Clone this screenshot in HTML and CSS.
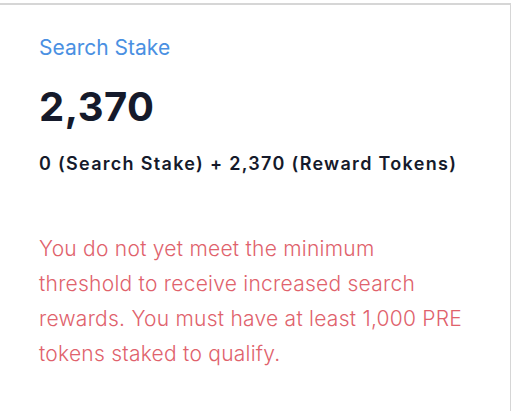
FILE: index.html
```html
<!DOCTYPE html>
<html lang="en">
<head>
    <meta charset="UTF-8">
    <title>Search Stake</title>
    <link rel="stylesheet" href="styles.css">
</head>
<body>
    <div class="card">
        <h2 class="card-title">Search Stake</h2>
        <div class="stake-total">2,370</div>
        <div class="stake-breakdown">0 (Search Stake) + 2,370 (Reward Tokens)</div>
        <p class="stake-warning">
            You do not yet meet the minimum threshold to receive increased search rewards. You must have at least 1,000 PRE tokens staked to qualify.
        </p>
    </div>
</body>
</html>
```

FILE: styles.css
```css
* {
    margin: 0;
    padding: 0;
    box-sizing: border-box;
}

body {
    font-family: 'Inter', 'Open Sans', sans-serif;
    background: #ffffff;
    color: #151a2b;
    padding-top: 3px;
}

.card {
    width: 511px;
    min-height: 408px;
    border-top: 2px solid #d6d6d6;
    border-right: 1px solid #d6d6d6;
    padding: 30px 40px 40px 39px;
}

.card-title {
    color: #4a90e2;
    font-size: 21px;
    font-weight: 400;
    line-height: 26px;
}

.stake-total {
    margin-top: 24px;
    font-size: 40px;
    font-weight: 700;
    line-height: 44px;
    letter-spacing: 0.5px;
}

.stake-breakdown {
    margin-top: 23px;
    font-size: 18px;
    font-weight: 600;
    line-height: 24px;
    letter-spacing: 1.3px;
}

.stake-warning {
    margin-top: 55px;
    color: #e0626c;
    font-size: 21px;
    font-weight: 300;
    line-height: 35px;
    letter-spacing: 0.25px;
}
```
